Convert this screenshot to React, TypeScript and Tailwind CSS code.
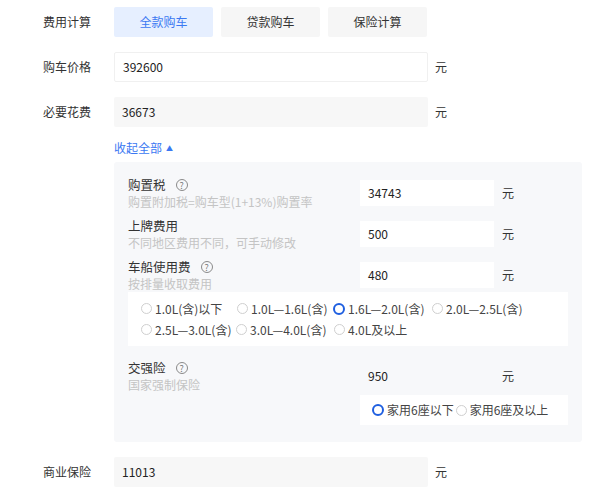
import React from "react";

const font = { fontFamily: '"Noto Sans CJK SC", "Microsoft YaHei", sans-serif' };

function Help() {
  return (
    <span className="ml-[10px] inline-flex h-[12px] w-[12px] items-center justify-center rounded-full border border-[#8a8a8a] text-[9px] leading-none text-[#7a7a7a]">
      ?
    </span>
  );
}

function Radio({ label, checked, min }: { label: string; checked?: boolean; min?: string }) {
  return (
    <span className={`inline-flex items-center ${min ?? ""}`}>
      {checked ? (
        <span className="h-[12px] w-[12px] rounded-full border-[2px] border-[#1f5fe0] bg-white" />
      ) : (
        <span className="h-[11px] w-[11px] rounded-full border border-[#cfcfcf] bg-white" />
      )}
      <span className="ml-[3px] mr-[2px]">{label}</span>
    </span>
  );
}

function MainRow({ label, value, filled }: { label: string; value: string; filled?: boolean }) {
  return (
    <div className="mt-[15px] flex items-center">
      <div className="w-[114px] pl-[43px] text-[12px] text-[#333]">{label}</div>
      <div
        className={`flex h-[30px] w-[314px] items-center rounded-[2px] px-[8px] text-[12px] text-[#222] ${
          filled ? "bg-[#f7f7f7]" : "border border-[#f0f0f0] bg-white"
        }`}
      >
        {value}
      </div>
      <span className="ml-[7px] text-[12px] text-[#333]">元</span>
    </div>
  );
}

function FeeRow({ label, hint, value, help }: { label: string; hint: string; value: string; help?: boolean }) {
  return (
    <div className="flex h-[34px] items-center">
      <div className="w-[232px]">
        <div className="flex items-center text-[12.5px] leading-[18px] text-[#333]">
          {label}
          {help && <Help />}
        </div>
        <div className="text-[12px] leading-[16px] text-[#c4c4c4]">{hint}</div>
      </div>
      <div className="flex h-[26px] w-[134px] items-center bg-white px-[8px] text-[12px] text-[#222]">{value}</div>
      <span className="ml-[8px] text-[12px] text-[#333]">元</span>
    </div>
  );
}

export default function App() {
  return (
    <div className="h-[492px] w-[600px] bg-white pt-[7px]" style={font}>
      <div className="flex items-center">
        <div className="w-[114px] pl-[43px] text-[12px] text-[#333]">费用计算</div>
        <div className="flex gap-[8px] text-[12px]">
          <div className="flex h-[30px] w-[99px] items-center justify-center rounded-[2px] bg-[#e6efff] text-[#3b78f2]">全款购车</div>
          <div className="flex h-[30px] w-[99px] items-center justify-center rounded-[2px] bg-[#f6f6f6] text-[#333]">贷款购车</div>
          <div className="flex h-[30px] w-[99px] items-center justify-center rounded-[2px] bg-[#f6f6f6] text-[#333]">保险计算</div>
        </div>
      </div>

      <MainRow label="购车价格" value="392600" />
      <MainRow label="必要花费" value="36673" filled />

      <div className="ml-[114px] mt-[11px] flex h-[20px] items-center text-[12px] text-[#3b78f2]">
        收起全部
        <span className="ml-[4px] text-[7px]">▲</span>
      </div>

      <div className="ml-[114px] mt-[4px] w-[468px] rounded-[3px] bg-[#f7f8fa] px-[14px] pb-[17px] pt-[14px]">
        <div className="flex flex-col gap-[7px]">
          <FeeRow label="购置税" hint="购置附加税=购车型(1+13%)购置率" value="34743" help />
          <FeeRow label="上牌费用" hint="不同地区费用不同，可手动修改" value="500" />
          <FeeRow label="车船使用费" hint="按排量收取费用" value="480" help />
        </div>
        <div className="flex h-[54px] flex-col bg-white pl-[13px] pt-[6px] text-[12px] leading-[21px] text-[#444]">
          <div className="flex">
            <Radio label="1.0L(含)以下" min="min-w-[96px]" />
            <Radio label="1.0L—1.6L(含)" min="min-w-[96px]" />
            <Radio label="1.6L—2.0L(含)" checked min="min-w-[99px]" />
            <Radio label="2.0L—2.5L(含)" />
          </div>
          <div className="flex">
            <Radio label="2.5L—3.0L(含)" min="min-w-[95px]" />
            <Radio label="3.0L—4.0L(含)" min="min-w-[98px]" />
            <Radio label="4.0L及以上" />
          </div>
        </div>

        <div className="mt-[13px] flex">
          <div className="w-[232px]">
            <div className="flex items-center text-[12.5px] leading-[18px] text-[#333]">
              交强险
              <Help />
            </div>
            <div className="text-[12px] leading-[16px] text-[#c4c4c4]">国家强制保险</div>
          </div>
          <div className="flex flex-col">
            <div className="mt-[4px] flex items-center">
              <div className="flex h-[26px] w-[134px] items-center px-[8px] text-[12px] text-[#222]">950</div>
              <span className="ml-[8px] text-[12px] text-[#333]">元</span>
            </div>
            <div className="mt-[6px] flex h-[30px] w-[208px] items-center bg-white pl-[12px] text-[12px] text-[#444]">
              <Radio label="家用6座以下" checked />
              <Radio label="家用6座及以上" />
            </div>
          </div>
        </div>
      </div>

      <MainRow label="商业保险" value="11013" filled />
    </div>
  );
}
